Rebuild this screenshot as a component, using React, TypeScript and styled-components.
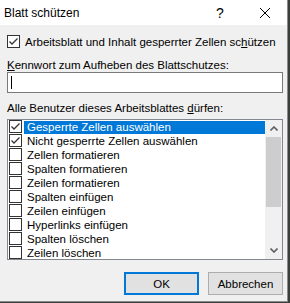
import React from "react";
import styled, { createGlobalStyle } from "styled-components";

const Global = createGlobalStyle`
  html, body { margin: 0; padding: 0; background: #3a3f3c; }
  body { font-family: "Liberation Sans", Arial, sans-serif; font-size: 11.5px; color: #000; }
  * { box-sizing: border-box; }
`;

const Dialog = styled.div`
  width: 288px;
  height: 302px;
  background: #f0f0f0;
  border-right: 1px solid #8c8c8c;
  border-bottom: 1px solid #8c8c8c;
  display: flex;
  flex-direction: column;
  white-space: nowrap;
`;

const TitleBar = styled.div`
  height: 25px;
  background: #fff;
  display: flex;
  align-items: center;
  padding-left: 4px;
  flex-shrink: 0;
`;

const Title = styled.div`
  flex: 1;
  font-size: 12px;
`;

const TitleButton = styled.div<{ $w: number }>`
  width: ${(p) => p.$w}px;
  height: 25px;
  display: flex;
  align-items: center;
  justify-content: center;
  font-size: 14px;
`;

const Body = styled.div`
  display: flex;
  flex-direction: column;
  padding: 10px 4px 0 7px;
`;

const CheckRow = styled.label`
  display: flex;
  align-items: center;
  height: 13px;
  gap: 5px;
`;

const Box = styled.span`
  width: 13px;
  height: 13px;
  border: 1px solid #333;
  background: #fff;
  display: inline-flex;
  align-items: center;
  justify-content: center;
  flex-shrink: 0;
`;

const Caption = styled.div<{ $mt: number }>`
  margin-top: ${(p) => p.$mt}px;
  height: 14px;
  line-height: 14px;
`;

const Input = styled.div`
  height: 21px;
  border: 1px solid #7a7a7a;
  background: #fff;
  position: relative;
`;

const Caret = styled.span`
  position: absolute;
  left: 3px;
  top: 3px;
  width: 1px;
  height: 13px;
  background: #000;
`;

const ListBox = styled.div`
  margin-top: 4px;
  height: 141px;
  border: 1px solid #828790;
  background: #fff;
  display: flex;
  overflow: hidden;
`;

const Items = styled.div`
  flex: 1;
  padding-left: 1px;
`;

const Item = styled.div`
  height: 14px;
  display: flex;
  align-items: flex-start;
`;

const ItemLabel = styled.span<{ $sel?: boolean }>`
  margin-top: 1px;
  margin-left: 2px;
  height: 13px;
  line-height: 13px;
  padding-left: 3px;
  flex: 1;
  background: ${(p) => (p.$sel ? "#0078d7" : "transparent")};
  color: ${(p) => (p.$sel ? "#fff" : "#000")};
`;

const ScrollBar = styled.div`
  width: 17px;
  background: #f0f0f0;
  display: flex;
  flex-direction: column;
`;

const ArrowBtn = styled.div`
  height: 17px;
  display: flex;
  align-items: center;
  justify-content: center;
`;

const Thumb = styled.div`
  height: 70px;
  margin: 0 1px;
  background: #cdcdcd;
`;

const Track = styled.div`
  flex: 1;
`;

const Buttons = styled.div`
  margin-top: 12px;
  display: flex;
  justify-content: flex-end;
  gap: 9px;
`;

const Button = styled.div<{ $default?: boolean }>`
  width: 75px;
  height: 23px;
  background: #e1e1e1;
  border: ${(p) => (p.$default ? "2px solid #0078d7" : "1px solid #adadad")};
  display: flex;
  align-items: center;
  justify-content: center;
`;

const Check = () => (
  <svg width="11" height="11" viewBox="0 0 11 11">
    <path d="M1.5 5.5 L4 8 L9.5 2.5" fill="none" stroke="#333" strokeWidth="1.3" />
  </svg>
);

const CheckBox = ({ checked }: { checked?: boolean }) => <Box>{checked && <Check />}</Box>;

const items = [
  "Gesperrte Zellen auswählen",
  "Nicht gesperrte Zellen auswählen",
  "Zellen formatieren",
  "Spalten formatieren",
  "Zeilen formatieren",
  "Spalten einfügen",
  "Zeilen einfügen",
  "Hyperlinks einfügen",
  "Spalten löschen",
  "Zeilen löschen",
];

export default function App() {
  return (
    <>
      <Global />
      <Dialog>
        <TitleBar>
          <Title>Blatt schützen</Title>
          <TitleButton $w={46}>?</TitleButton>
          <TitleButton $w={44}>
            <svg width="10" height="10" viewBox="0 0 10 10">
              <path d="M0 0 L10 10 M10 0 L0 10" stroke="#000" strokeWidth="1" />
            </svg>
          </TitleButton>
        </TitleBar>
        <Body>
          <CheckRow>
            <CheckBox checked />
            <span>
              Arbeitsblatt und Inhalt gesperrter Zellen sc<u>h</u>ützen
            </span>
          </CheckRow>
          <Caption $mt={10}>
            <u>K</u>ennwort zum Aufheben des Blattschutzes:
          </Caption>
          <Input>
            <Caret />
          </Input>
          <Caption $mt={8}>
            Alle Benutzer dieses Arbeitsblattes <u>d</u>ürfen:
          </Caption>
          <ListBox>
            <Items>
              {items.map((t, i) => (
                <Item key={t}>
                  <CheckBox checked={i < 2} />
                  <ItemLabel $sel={i === 0}>{t}</ItemLabel>
                </Item>
              ))}
            </Items>
            <ScrollBar>
              <ArrowBtn>
                <svg width="8" height="5" viewBox="0 0 8 5">
                  <path d="M0.5 4.5 L4 1 L7.5 4.5" fill="none" stroke="#606060" strokeWidth="1.6" />
                </svg>
              </ArrowBtn>
              <Thumb />
              <Track />
              <ArrowBtn>
                <svg width="8" height="5" viewBox="0 0 8 5">
                  <path d="M0.5 0.5 L4 4 L7.5 0.5" fill="none" stroke="#606060" strokeWidth="1.6" />
                </svg>
              </ArrowBtn>
            </ScrollBar>
          </ListBox>
          <Buttons>
            <Button $default>OK</Button>
            <Button>Abbrechen</Button>
          </Buttons>
        </Body>
      </Dialog>
    </>
  );
}
